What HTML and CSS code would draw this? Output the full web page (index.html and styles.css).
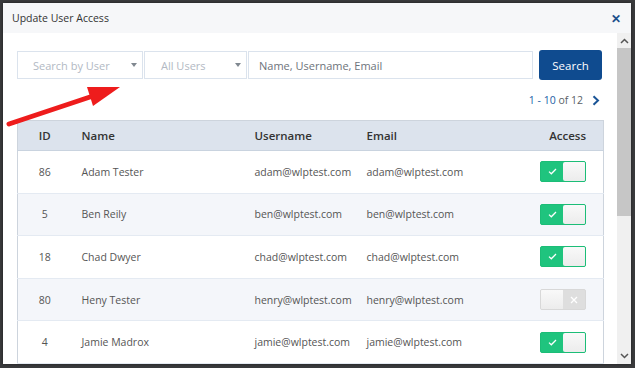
FILE: index.html
```html
<!DOCTYPE html>
<html lang="en">
<head>
    <meta charset="UTF-8">
    <title>Update User Access</title>
    <link rel="stylesheet" href="styles.css">
</head>
<body>
    <div class="page">
        <section class="modal">
            <div class="modalHead">
                <h1 class="modalTitle">Update User Access</h1>
                <span class="close">&#x2715;</span>
            </div>
            <div class="modalBody">
                <div class="content">
                    <div class="searchRow">
                        <div class="pick pickUser">Search by User<i class="caret"></i></div>
                        <div class="pick pickAll">All Users<i class="caret"></i></div>
                        <input type="text" class="query" value="Name, Username, Email">
                        <button class="searchBtn">Search</button>
                    </div>
                    <div class="pager">
                        <span class="range">1 - 10</span>&nbsp;of 12
                        <svg class="next" width="8" height="11" viewBox="0 0 8 11"><path d="M1.5 1.2 L6 5.5 L1.5 9.8" fill="none" stroke="#1a5496" stroke-width="2"/></svg>
                    </div>
                    <table class="users">
                        <colgroup>
                            <col class="cId"><col class="cName"><col class="cUser"><col class="cMail"><col>
                        </colgroup>
                        <thead>
                            <tr>
                                <th class="num">ID</th>
                                <th>Name</th>
                                <th>Username</th>
                                <th>Email</th>
                                <th class="acc">Access</th>
                            </tr>
                        </thead>
                        <tbody>
                            <tr>
                                <td class="num">86</td><td>Adam Tester</td><td>adam@wlptest.com</td><td>adam@wlptest.com</td>
                                <td class="acc"><span class="toggle on"><b class="mark"><svg width="9" height="7" viewBox="0 0 9 7"><path d="M1 3.6 L3.3 5.8 L8 1" fill="none" stroke="#fff" stroke-width="1.3"/></svg></b><i class="knob"></i></span></td>
                            </tr>
                            <tr>
                                <td class="num">5</td><td>Ben Reily</td><td>ben@wlptest.com</td><td>ben@wlptest.com</td>
                                <td class="acc"><span class="toggle on"><b class="mark"><svg width="9" height="7" viewBox="0 0 9 7"><path d="M1 3.6 L3.3 5.8 L8 1" fill="none" stroke="#fff" stroke-width="1.3"/></svg></b><i class="knob"></i></span></td>
                            </tr>
                            <tr>
                                <td class="num">18</td><td>Chad Dwyer</td><td>chad@wlptest.com</td><td>chad@wlptest.com</td>
                                <td class="acc"><span class="toggle on"><b class="mark"><svg width="9" height="7" viewBox="0 0 9 7"><path d="M1 3.6 L3.3 5.8 L8 1" fill="none" stroke="#fff" stroke-width="1.3"/></svg></b><i class="knob"></i></span></td>
                            </tr>
                            <tr>
                                <td class="num">80</td><td>Heny Tester</td><td>henry@wlptest.com</td><td>henry@wlptest.com</td>
                                <td class="acc"><span class="toggle off"><i class="knob"></i><b class="mark"><svg width="8" height="8" viewBox="0 0 8 8"><path d="M1 1 L7 7 M7 1 L1 7" fill="none" stroke="#fff" stroke-width="1.3"/></svg></b></span></td>
                            </tr>
                            <tr>
                                <td class="num">4</td><td>Jamie Madrox</td><td>jamie@wlptest.com</td><td>jamie@wlptest.com</td>
                                <td class="acc"><span class="toggle on"><b class="mark"><svg width="9" height="7" viewBox="0 0 9 7"><path d="M1 3.6 L3.3 5.8 L8 1" fill="none" stroke="#fff" stroke-width="1.3"/></svg></b><i class="knob"></i></span></td>
                            </tr>
                        </tbody>
                    </table>
                </div>
                <div class="scrollbar">
                    <svg class="arrowUp" width="9" height="6" viewBox="0 0 9 6"><path d="M1 5 L4.5 1.5 L8 5" fill="none" stroke="#555" stroke-width="1.5"/></svg>
                    <div class="thumb"></div>
                    <div class="track"></div>
                    <svg class="arrowDown" width="9" height="6" viewBox="0 0 9 6"><path d="M1 1 L4.5 4.5 L8 1" fill="none" stroke="#555" stroke-width="1.5"/></svg>
                </div>
            </div>
        </section>
    </div>
    <!-- red arrow drawn over the screenshot -->
    <svg class="pointer" width="635" height="368" viewBox="0 0 635 368">
        <line x1="9" y1="124" x2="96" y2="95" stroke="#ee1c1c" stroke-width="5" stroke-linecap="round"/>
        <polygon points="120,87 87,87 93,106" fill="#ee1c1c"/>
    </svg>
</body>
</html>
```

FILE: styles.css
```css
body,
h1{
    margin: 0;
}
body{
    width: 635px;
    height: 368px;
    overflow: hidden;
    background-color: #3a3b3d;
    font-family: "Open Sans", "Liberation Sans", sans-serif;
    font-size: 11px;
    color: #555;
}
.page{
    padding: 3px 4px 0 3px;
}
.modal{
    width: 628px;
    height: 361px;
    background-color: #fff;
    display: flex;
    flex-direction: column;
    overflow: hidden;
    box-shadow: 0 0 3px rgba(0,0,0,.5);
}
.modalHead{
    height: 30px;
    flex: none;
    display: flex;
    align-items: center;
    justify-content: space-between;
    padding: 0 10px 0 9px;
    background-color: #f6f7f9;
}
.modalTitle{
    font-size: 10.5px;
    font-weight: normal;
    color: #333;
}
.close{
    color: #1a4f8b;
    font-size: 12px;
    font-weight: bold;
}
.modalBody{
    flex: 1;
    display: flex;
    min-height: 0;
}
.content{
    flex: 1;
    padding: 17px 13px 0 14px;
    overflow: hidden;
}
.searchRow{
    display: flex;
    align-items: center;
    height: 30px;
}
.pick,
.query{
    box-sizing: border-box;
    height: 28px;
    border: 1px solid #dbe3ed;
    background-color: #fff;
}
.pick{
    position: relative;
    display: flex;
    align-items: center;
    color: #b2b9c3;
    margin-right: 1px;
}
.pickUser{
    width: 126px;
    padding-left: 15px;
}
.pickAll{
    width: 103px;
    padding-left: 16px;
}
.caret{
    position: absolute;
    right: 5px;
    top: 11px;
    border-left: 3px solid transparent;
    border-right: 3px solid transparent;
    border-top: 4px solid #808890;
}
.query{
    width: 285px;
    padding: 0 10px;
    font-family: inherit;
    font-size: 11px;
    color: #6d737a;
    outline: none;
}
.searchBtn{
    margin-left: 6px;
    width: 63px;
    height: 30px;
    border: none;
    border-radius: 3px;
    background-color: #0f4b8f;
    color: #fff;
    font-family: inherit;
    font-size: 11.5px;
}
.pager{
    display: flex;
    align-items: center;
    justify-content: flex-end;
    height: 40px;
    padding-right: 4px;
    color: #5a5f66;
    font-size: 10.5px;
}
.range{
    color: #1d5ea5;
}
.next{
    margin-left: 9px;
}
.users{
    width: 100%;
    table-layout: fixed;
    border-collapse: collapse;
    border: 1px solid #cdd4dd;
}
.cId{
    width: 54px;
}
.cName{
    width: 173px;
}
.cUser{
    width: 112px;
}
.cMail{
    width: 150px;
}
th{
    height: 29px;
    background-color: #dce3ed;
    color: #333;
    font-weight: 600;
    font-size: 11.5px;
    text-align: left;
    padding: 0 10px;
    border-bottom: 1px solid #c9d3df;
}
td{
    height: 41.6px;
    padding: 0 10px;
    border-bottom: 1px solid #e4eaf2;
    white-space: nowrap;
    font-size: 10.5px;
}
tbody tr:nth-child(even){
    background-color: #f4f6fa;
}
.num{
    text-align: center;
}
.acc{
    text-align: right;
    padding-right: 17px;
}
.toggle{
    display: inline-flex;
    vertical-align: middle;
    box-sizing: border-box;
    width: 46px;
    height: 21px;
    border-radius: 2px;
    overflow: hidden;
}
.toggle.on{
    background-color: #1fc47e;
    border: 1px solid #1cbd77;
}
.toggle.off{
    background-color: #dedede;
    border: 1px solid #d8d8d8;
}
.mark{
    flex: 1;
    display: flex;
    align-items: center;
    justify-content: center;
}
.knob{
    width: 22px;
    background: linear-gradient(#f9f9f9, #ececec);
}
.toggle.on .knob{
    border-radius: 2px 0 0 2px;
}
.scrollbar{
    width: 14px;
    flex: none;
    display: flex;
    flex-direction: column;
    align-items: center;
    background-color: #f0f0f0;
}
.arrowUp{
    margin: 5px 0 4px;
}
.thumb{
    width: 14px;
    height: 168px;
    background-color: #c6c6c6;
}
.track{
    flex: 1;
}
.arrowDown{
    margin: 4px 0 5px;
}
.pointer{
    position: absolute;
    left: 0;
    top: 0;
}
```
